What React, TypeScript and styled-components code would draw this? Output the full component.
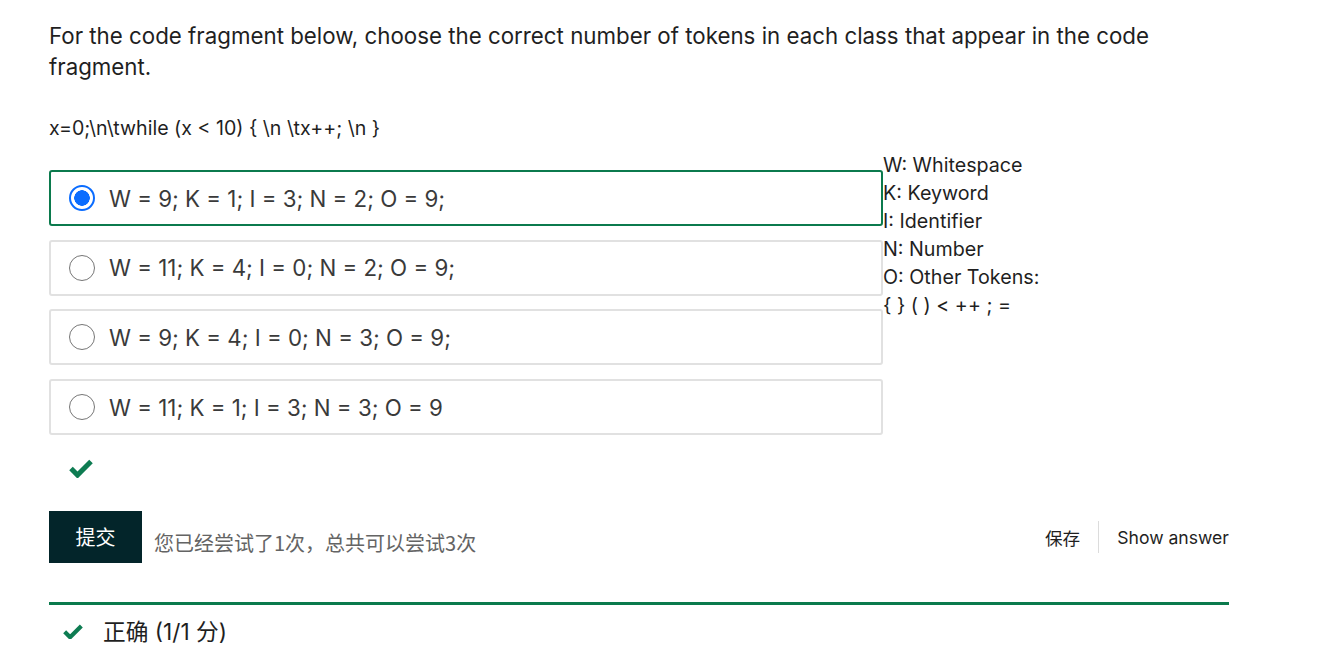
import React from 'react';
import styled, { createGlobalStyle } from 'styled-components';

const GlobalStyle = createGlobalStyle`
  body {
    margin: 0;
    background: #fff;
    font-family: Inter, "Noto Sans CJK SC", sans-serif;
    color: #1f1f1f;
  }
`;

const Page = styled.div`
  padding: 20px 0 0 49px;
  width: 1180px;
`;

const Prompt = styled.p`
  margin: 0;
  font-size: 22.3px;
  line-height: 31px;
  color: #1f1f1f;
`;

const Code = styled.p`
  margin: 34px 0 0;
  font-size: 19.6px;
  line-height: 24px;
  color: #1f1f1f;
`;

const QuestionRow = styled.div`
  display: flex;
  align-items: flex-start;
  margin-top: 11px;
`;

const Options = styled.div`
  display: flex;
  flex-direction: column;
  gap: 13.7px;
  width: 834px;
  padding-top: 19px;
`;

const Option = styled.label<{ $selected?: boolean }>`
  box-sizing: border-box;
  display: flex;
  align-items: center;
  gap: 14px;
  height: 56px;
  padding: 0 18px;
  border: 2px solid ${(p) => (p.$selected ? '#0b7a4d' : '#e1e1e1')};
  border-radius: 3px;
  font-size: 22.3px;
  color: #3a3a3a;
  cursor: pointer;
`;

const Radio = styled.span<{ $checked?: boolean }>`
  box-sizing: border-box;
  width: 26px;
  height: 26px;
  border-radius: 50%;
  flex-shrink: 0;
  border: ${(p) => (p.$checked ? '2px solid #0a6cff' : '1.5px solid #767676')};
  background: ${(p) => (p.$checked ? 'radial-gradient(circle, #0a6cff 0 7.5px, #fff 8px)' : '#fff')};
`;

const Legend = styled.div`
  font-size: 19.7px;
  line-height: 28px;
  color: #1f1f1f;
`;

const Feedback = styled.div`
  height: 66px;
  display: flex;
  align-items: center;
  padding-left: 20px;
`;

const Actions = styled.div`
  display: flex;
  align-items: center;
  margin-top: 10px;
  height: 52px;
`;

const Submit = styled.button`
  height: 52px;
  width: 93px;
  border: 0;
  border-radius: 0;
  background: #03252a;
  color: #fff;
  font-family: "Noto Sans CJK SC", sans-serif;
  font-size: 20px;
  padding: 0 0 2px;
`;

const Attempts = styled.span`
  margin: 10px 0 0 12px;
  font-size: 20px;
  color: #646464;
  font-family: "Noto Sans CJK SC", sans-serif;
`;

const Spacer = styled.div`
  flex: 1;
`;

const LinkButton = styled.button`
  border: 0;
  background: none;
  font-family: Inter, "Noto Sans CJK SC", sans-serif;
  font-size: 17.6px;
  color: #1f1f1f;
  padding: 0;
`;

const Divider = styled.span`
  width: 1px;
  height: 32px;
  background: #dcdcdc;
  margin: 0 18px;
`;

const Result = styled.div`
  margin-top: 39px;
  border-top: 3px solid #0b7a4d;
  display: flex;
  align-items: center;
  gap: 20px;
  padding: 9px 0 0 14px;
  font-size: 22.7px;
  color: #1f1f1f;
`;

const Check = ({ size }: { size: number }) => (
  <svg width={size} height={size * 0.8} viewBox="0 0 24 19" aria-hidden>
    <path d="M2 10.5 L8.5 17 L22 3.5" fill="none" stroke="#0e7c52" strokeWidth="5" strokeLinecap="butt" strokeLinejoin="miter" />
  </svg>
);

const choices = [
  'W = 9; K = 1; I = 3; N = 2; O = 9;',
  'W = 11; K = 4; I = 0; N = 2; O = 9;',
  'W = 9; K = 4; I = 0; N = 3; O = 9;',
  'W = 11; K = 1; I = 3; N = 3; O = 9',
];

export default function App() {
  return (
    <>
      <GlobalStyle />
      <Page>
        <Prompt>
          For the code fragment below, choose the correct number of tokens in each class that appear in the code fragment.
        </Prompt>
        <Code>{'x=0;\\n\\twhile (x < 10) { \\n \\tx++; \\n }'}</Code>
        <QuestionRow>
          <Options>
            {choices.map((c, i) => (
              <Option key={c} $selected={i === 0}>
                <Radio $checked={i === 0} />
                {c}
              </Option>
            ))}
          </Options>
          <Legend>
            W: Whitespace
            <br />
            K: Keyword
            <br />
            I: Identifier
            <br />
            N: Number
            <br />
            O: Other Tokens:
            <br />
            {'{ } ( ) < ++ ; ='}
          </Legend>
        </QuestionRow>
        <Feedback>
          <Check size={24} />
        </Feedback>
        <Actions>
          <Submit>提交</Submit>
          <Attempts>您已经尝试了1次，总共可以尝试3次</Attempts>
          <Spacer />
          <LinkButton>保存</LinkButton>
          <Divider />
          <LinkButton>Show answer</LinkButton>
        </Actions>
        <Result>
          <Check size={20} />
          正确 (1/1 分)
        </Result>
      </Page>
    </>
  );
}
